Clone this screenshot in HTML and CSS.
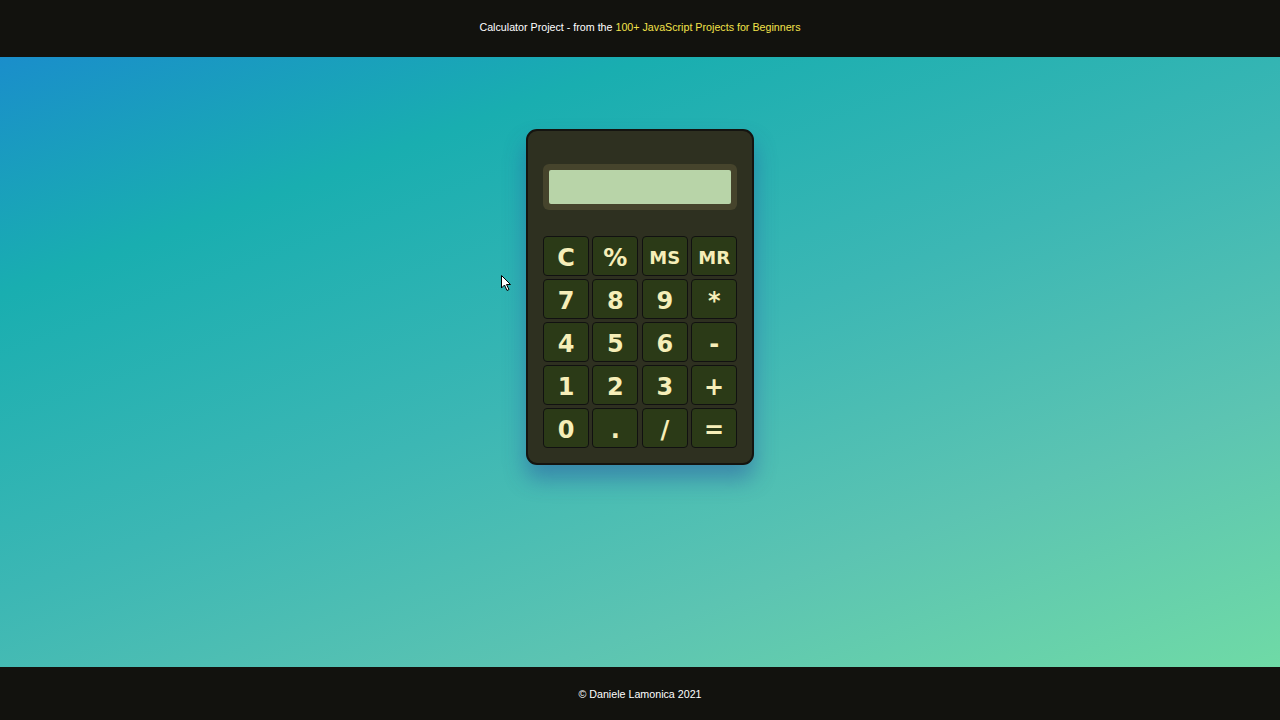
FILE: index.html
```html
<!DOCTYPE html>
<html lang="en">
<head>
<meta charset="utf-8">
<title>Calculator Project</title>
<link rel="stylesheet" href="styles.css">
</head>
<body>
<header class="top">
  <p>Calculator Project - from the <a class="hl" href="#">100+ JavaScript Projects for Beginners</a></p>
</header>
<main class="stage">
  <div class="calc">
    <div class="screen"><div class="lcd"></div></div>
    <div class="keys">
      <button class="key">C</button>
      <button class="key">%</button>
      <button class="key small">MS</button>
      <button class="key small">MR</button>
      <button class="key">7</button>
      <button class="key">8</button>
      <button class="key">9</button>
      <button class="key">*</button>
      <button class="key">4</button>
      <button class="key">5</button>
      <button class="key">6</button>
      <button class="key">-</button>
      <button class="key">1</button>
      <button class="key">2</button>
      <button class="key">3</button>
      <button class="key">+</button>
      <button class="key">0</button>
      <button class="key">.</button>
      <button class="key">/</button>
      <button class="key">=</button>
    </div>
  </div>
  <svg class="cursor" width="12" height="18" viewBox="0 0 12 18"><path d="M0.5 0.5 L0.5 13 L3.5 10 L6 15.5 L8 14.5 L5.5 9.5 L9.5 9.5 Z" fill="#fff" stroke="#000" stroke-width="1"/></svg>
</main>
<footer class="bottom">
  <p>&copy; Daniele Lamonica 2021</p>
</footer>
</body>
</html>
```
FILE: styles.css
```css
* { box-sizing: border-box; }
html, body { margin: 0; padding: 0; height: 100%; }
body {
  display: flex;
  flex-direction: column;
  font-family: "Liberation Sans", Arial, sans-serif;
  background: #111;
}
.top, .bottom {
  background: #12120e;
  color: #fff;
  font-size: 10.7px;
  display: flex;
  align-items: center;
  justify-content: center;
}
.top { height: 57px; padding-bottom: 4px; }
.bottom { height: 53px; }
.top p, .bottom p { margin: 0; }
.hl { color: #f2e24a; text-decoration: none; }
.stage {
  position: relative;
  flex: 1;
  background: linear-gradient(160deg, #1a8ecb 0%, #19aeb0 22%, #3cb7b4 50%, #5cc4b2 75%, #6fdaa6 100%);
  display: flex;
  justify-content: center;
  align-items: flex-start;
  padding-top: 72px;
}
.calc {
  width: 228px;
  height: 336px;
  background: #2e3020;
  border: 2px solid #141410;
  border-radius: 11px;
  padding: 33px 15px 0 15px;
  box-shadow: 0 14px 22px rgba(40, 70, 160, 0.45);
}
.screen {
  height: 46px;
  background: #46442c;
  border-radius: 6px;
  padding: 6px;
}
.lcd {
  height: 100%;
  background: #b8d4a8;
  border-radius: 2px;
}
.keys {
  margin-top: 26px;
  display: grid;
  grid-template-columns: repeat(4, 46px);
  grid-auto-rows: 40px;
  column-gap: 3.4px;
  row-gap: 3px;
}
.key {
  background: #2b3a17;
  border: 1px solid #111;
  border-radius: 4px;
  color: #f6eeb8;
  font-family: Verdana, "DejaVu Sans", sans-serif;
  font-weight: bold;
  font-size: 24px;
  padding: 3px 0 0 0;
  line-height: 1;
  display: flex;
  align-items: center;
  justify-content: center;
}
.key.small { font-size: 18px; }
.cursor {
  position: absolute;
  left: 501px;
  top: 218px;
}
```
